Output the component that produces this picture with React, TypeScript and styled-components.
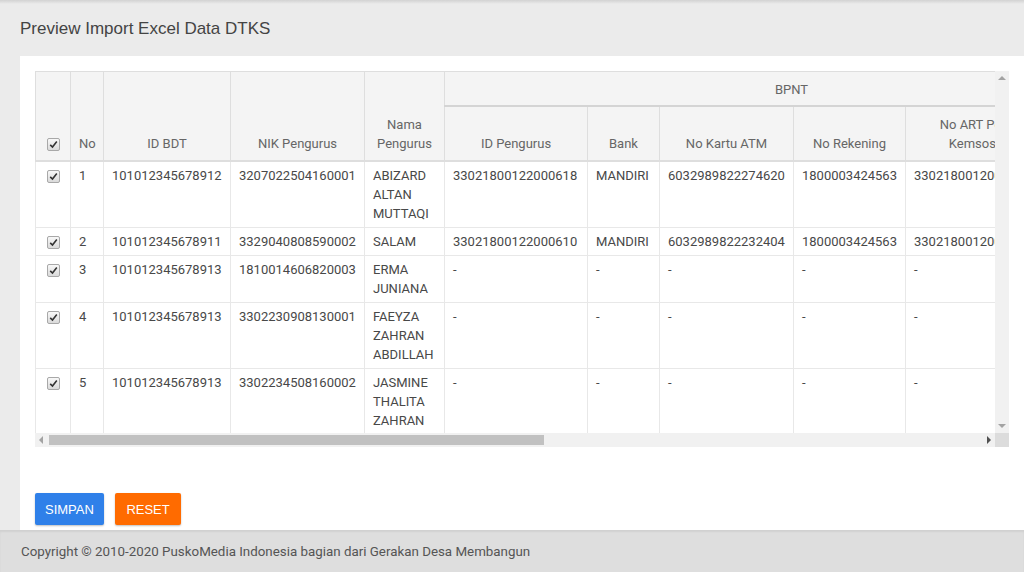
import React from 'react';
import styled, { createGlobalStyle } from 'styled-components';

interface Row {
  no: number;
  idBdt: string;
  nik: string;
  nama: string;
  idPengurus: string;
  bank: string;
  kartu: string;
  rekening: string;
  art: string;
  status: string;
}

const rows: Row[] = [
  {
    no: 1,
    idBdt: '101012345678912',
    nik: '3207022504160001',
    nama: 'ABIZARD ALTAN MUTTAQI',
    idPengurus: '33021800122000618',
    bank: 'MANDIRI',
    kartu: '6032989822274620',
    rekening: '1800003424563',
    art: '3302180012000006',
    status: '-',
  },
  {
    no: 2,
    idBdt: '101012345678911',
    nik: '3329040808590002',
    nama: 'SALAM',
    idPengurus: '33021800122000610',
    bank: 'MANDIRI',
    kartu: '6032989822232404',
    rekening: '1800003424563',
    art: '3302180012000005',
    status: '-',
  },
  {
    no: 3,
    idBdt: '101012345678913',
    nik: '1810014606820003',
    nama: 'ERMA JUNIANA',
    idPengurus: '-',
    bank: '-',
    kartu: '-',
    rekening: '-',
    art: '-',
    status: '-',
  },
  {
    no: 4,
    idBdt: '101012345678913',
    nik: '3302230908130001',
    nama: 'FAEYZA ZAHRAN ABDILLAH',
    idPengurus: '-',
    bank: '-',
    kartu: '-',
    rekening: '-',
    art: '-',
    status: '-',
  },
  {
    no: 5,
    idBdt: '101012345678913',
    nik: '3302234508160002',
    nama: 'JASMINE THALITA ZAHRAN',
    idPengurus: '-',
    bank: '-',
    kartu: '-',
    rekening: '-',
    art: '-',
    status: '-',
  },
];

// column widths, the table is wider than its scroll viewport
const colWidths = [35, 33, 127, 134, 80, 143, 72, 134, 112, 170, 63];

const Check = () => (
  <CheckBox>
    <svg width="9" height="9" viewBox="0 0 9 9">
      <path d="M1.2 4.8 L3.5 7 L7.8 1.6" fill="none" stroke="#333" strokeWidth="1.6" />
    </svg>
  </CheckBox>
);

const App = () => {
  return (
    <Page>
      <GlobalStyle />
      <TopShade />
      <Title>Preview Import Excel Data DTKS</Title>
      <Main>
        <Card>
          <ScrollBox>
            <Viewport>
              <Table>
                <colgroup>
                  {colWidths.map((w, i) => (
                    <col key={i} style={{ width: w }} />
                  ))}
                </colgroup>
                <thead>
                  <tr>
                    <Th rowSpan={2}>
                      <Check />
                    </Th>
                    <Th rowSpan={2}>No</Th>
                    <Th rowSpan={2}>ID BDT</Th>
                    <Th rowSpan={2}>NIK Pengurus</Th>
                    <Th rowSpan={2}>Nama Pengurus</Th>
                    <GroupTh colSpan={6}>BPNT</GroupTh>
                  </tr>
                  <tr>
                    <Th>ID Pengurus</Th>
                    <Th>Bank</Th>
                    <Th>No Kartu ATM</Th>
                    <Th>No Rekening</Th>
                    <Th>
                      No ART Pengurus
                      <br />
                      Kemsos BPNT
                    </Th>
                    <Th>Status</Th>
                  </tr>
                </thead>
                <tbody>
                  {rows.map(r => (
                    <tr key={r.no}>
                      <Td $center>
                        <Check />
                      </Td>
                      <Td>{r.no}</Td>
                      <Td>{r.idBdt}</Td>
                      <Td>{r.nik}</Td>
                      <Td>{r.nama}</Td>
                      <Td>{r.idPengurus}</Td>
                      <Td>{r.bank}</Td>
                      <Td>{r.kartu}</Td>
                      <Td>{r.rekening}</Td>
                      <Td>{r.art}</Td>
                      <Td>{r.status}</Td>
                    </tr>
                  ))}
                </tbody>
              </Table>
            </Viewport>
            <VTrack>
              <Arrow $dir="up" />
              <Arrow $dir="down" />
            </VTrack>
            <HTrack>
              <Arrow $dir="left" />
              <Thumb />
              <Arrow $dir="right" />
            </HTrack>
            <Corner />
          </ScrollBox>
          <Actions>
            <Button $color="#2f80e9" $pad={10}>
              SIMPAN
            </Button>
            <Button $color="#ff6b00" $pad={11.5}>
              RESET
            </Button>
          </Actions>
        </Card>
      </Main>
      <Footer>Copyright © 2010-2020 PuskoMedia Indonesia bagian dari Gerakan Desa Membangun</Footer>
    </Page>
  );
};

const GlobalStyle = createGlobalStyle`
  body {
    margin: 0;
    background: #ebebeb;
    font-family: Roboto, "Liberation Sans", Arial, sans-serif;
  }
`;

const Page = styled.div`
  width: 1024px;
  height: 572px;
  display: flex;
  flex-direction: column;
  overflow: hidden;
`;

const TopShade = styled.div`
  height: 4px;
  background: linear-gradient(#d2d2d2, #ebebeb);
`;

const Title = styled.h1`
  margin: 0;
  padding: 15px 20px 0;
  height: 37px;
  font-family: "Liberation Sans", Arial, sans-serif;
  font-size: 17px;
  line-height: 20px;
  font-weight: normal;
  color: #444;
`;

const Main = styled.div`
  flex: 1;
  padding-left: 20px;
  display: flex;
`;

const Card = styled.div`
  flex: 1;
  background: #fff;
  padding: 15px 15px 5px;
  display: flex;
  flex-direction: column;
`;

const ScrollBox = styled.div`
  display: grid;
  grid-template-columns: 960px 14px;
  grid-template-rows: 362px 14px;
`;

const Viewport = styled.div`
  overflow: hidden;
`;

const Table = styled.table`
  table-layout: fixed;
  width: 1103px;
  border-collapse: collapse;
  font-size: 13px;
  line-height: 19px;
`;

const Th = styled.th`
  border: 1px solid #dedede;
  border-bottom-width: 2px;
  background: #f4f4f4;
  color: #666;
  font-weight: normal;
  text-align: center;
  vertical-align: bottom;
  padding: 8px 8px 7px;
`;

const GroupTh = styled(Th)`
  vertical-align: middle;
  padding: 8px 8px 6px;
  border-bottom-color: #d4d4d4;
`;

const Td = styled.td<{ $center?: boolean }>`
  border: 1px solid #e8e8e8;
  color: #484848;
  vertical-align: top;
  padding: 4px 8px;
  text-align: ${p => (p.$center ? 'center' : 'left')};
  white-space: normal;
`;

const CheckBox = styled.span`
  display: inline-flex;
  align-items: center;
  justify-content: center;
  width: 11px;
  height: 11px;
  border: 1px solid #a8a8a8;
  border-radius: 2px;
  background: linear-gradient(#f8f8f8, #dadada);
  vertical-align: -1px;
`;

const VTrack = styled.div`
  background: #f1f1f1;
  display: flex;
  flex-direction: column;
  justify-content: space-between;
  align-items: center;
  padding: 5px 0;
`;

const HTrack = styled.div`
  background: #f1f1f1;
  display: flex;
  align-items: center;
  padding: 0 4px;
`;

const Thumb = styled.div`
  width: 495px;
  height: 10px;
  margin-left: 6px;
  margin-right: auto;
  background: #c1c1c1;
`;

const Corner = styled.div`
  background: #dcdcdc;
`;

const Arrow = styled.span<{ $dir: 'up' | 'down' | 'left' | 'right' }>`
  width: 0;
  height: 0;
  border: 4px solid transparent;
  ${p =>
    p.$dir === 'up'
      ? 'border-bottom-color: #a3a3a3; border-top-width: 0;'
      : p.$dir === 'down'
      ? 'border-top-color: #a3a3a3; border-bottom-width: 0;'
      : p.$dir === 'left'
      ? 'border-right-color: #a3a3a3; border-left-width: 0;'
      : 'border-left-color: #505050; border-right-width: 0;'}
`;

const Actions = styled.div`
  margin-top: auto;
  display: flex;
  gap: 11px;
`;

const Button = styled.button<{ $color: string; $pad: number }>`
  height: 32px;
  padding: 0 ${p => p.$pad}px;
  border: none;
  border-radius: 2px;
  background: ${p => p.$color};
  color: #fff;
  font-family: "Liberation Sans", Arial, sans-serif;
  font-size: 13px;
  box-shadow: 0 1px 2px rgba(0, 0, 0, 0.25);
`;

const Footer = styled.footer`
  height: 42px;
  flex-shrink: 0;
  background: #dedede;
  box-shadow: inset 0 2px 2px rgba(0, 0, 0, 0.06);
  display: flex;
  align-items: center;
  padding-left: 21px;
  font-size: 13.35px;
  color: #555;
`;

export default App;
